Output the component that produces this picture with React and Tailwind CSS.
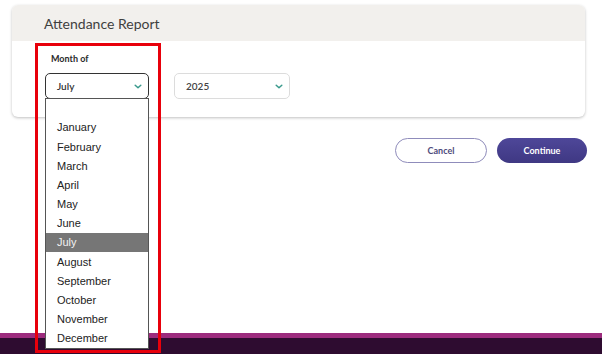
import React from 'react';

const MONTHS = [
  'January', 'February', 'March', 'April', 'May', 'June',
  'July', 'August', 'September', 'October', 'November', 'December',
];

function Chevron() {
  return (
    <svg width="8" height="5" viewBox="0 0 8 5" fill="none" stroke="#3a9a8c" strokeWidth="1.5" strokeLinecap="round" strokeLinejoin="round">
      <path d="M1.2 1.2l2.8 2.6 2.8-2.6" />
    </svg>
  );
}

export default function App() {
  const selected = 'July';

  return (
    <div className="relative w-[602px] h-[354px] bg-white overflow-hidden flex flex-col font-['Lato',sans-serif]">
      {/* Card */}
      <div className="mt-[5px] ml-[12px] w-[573px] h-[112px] rounded-[6px] bg-white shadow-[0_1px_3px_rgba(0,0,0,0.25)] overflow-hidden">
        <div className="h-[36px] bg-[#f2f0ed] flex items-center pl-[32px]">
          <span className="text-[14px] text-[#3f3f3f]">Attendance Report</span>
        </div>
        <div className="flex pl-[33px] pt-[13px] gap-[25px]">
          <div className="flex flex-col">
            <span className="text-[9px] font-bold text-[#2b2b2b] leading-none ml-[6px]">Month of</span>
            <div className="mt-[10px] w-[104px] h-[26px] rounded-[5px] border-[1.5px] border-[#333] flex items-center justify-between pl-[11px] pr-[6px]">
              <span className="text-[10px] font-semibold text-[#333]">July</span>
              <Chevron />
            </div>
          </div>
          <div className="mt-[19px] w-[116px] h-[26px] rounded-[5px] border border-[#dcdcdc] flex items-center justify-between pl-[11px] pr-[6px]">
            <span className="text-[10px] font-semibold text-[#444]">2025</span>
            <Chevron />
          </div>
        </div>
      </div>

      {/* Buttons */}
      <div className="flex justify-end gap-[10px] mt-[21px] pr-[15px]">
        <button className="w-[92px] h-[25px] rounded-full border-[1.5px] border-[#8f8cbb] text-[9px] font-bold text-[#4d4b7c]">
          Cancel
        </button>
        <button className="w-[90px] h-[25px] rounded-full bg-gradient-to-b from-[#4e4799] to-[#3f3883] text-[9px] font-bold text-white">
          Continue
        </button>
      </div>

      {/* Footer bar */}
      <div className="mt-auto h-[21px] flex flex-col">
        <div className="h-[5px] bg-[#9c2b7d]" />
        <div className="flex-1 bg-[#2e0c30]" />
      </div>

      {/* Open dropdown list */}
      <div className="absolute left-[45px] top-[98px] w-[104px] h-[251px] bg-white border border-[#555] pt-[19px] font-['Liberation_Sans',Arial,sans-serif]">
        {MONTHS.map((m) => (
          <div
            key={m}
            className={
              m === selected
                ? 'h-[19.2px] flex items-center pl-[11px] text-[11px] bg-[#767676] text-[#f2f2f2]'
                : 'h-[19.2px] flex items-center pl-[11px] text-[11px] text-[#222]'
            }
          >
            {m}
          </div>
        ))}
      </div>

      {/* Red annotation */}
      <div className="absolute left-[35px] top-[43px] w-[126px] h-[310px] border-[3px] border-[#e8000b] pointer-events-none" />
    </div>
  );
}
